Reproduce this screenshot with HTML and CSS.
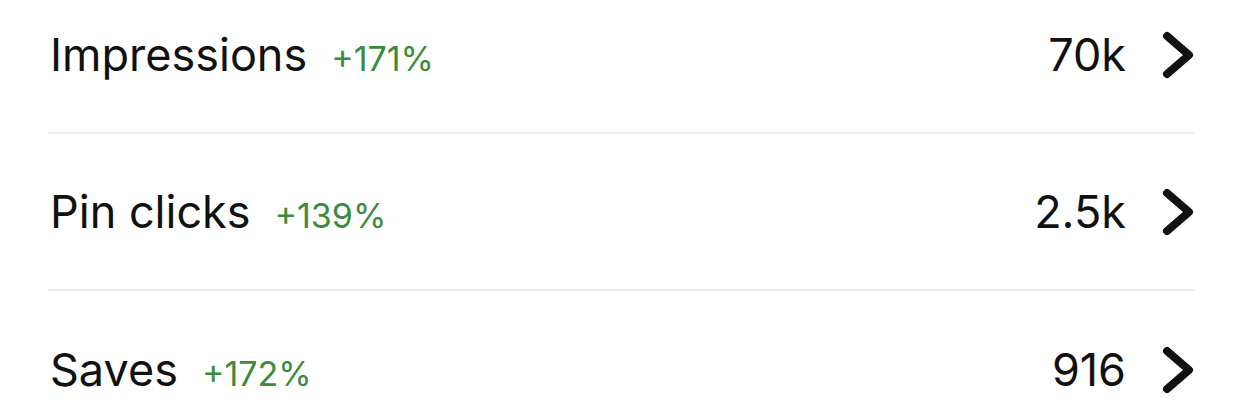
FILE: index.html
```html
<!DOCTYPE html>
<html>
<head>
    <title>Stats</title>
    <link rel="stylesheet" href="styles.css">
</head>
<body>
  <ul class="stat-list">
    <li class="stat-row">
      <div class="stat-name">Impressions <span class="stat-change">+171%</span></div>
      <div class="stat-value">70k
        <svg class="chevron" viewBox="0 0 32 48"><polyline points="5,5 27,24 5,43" /></svg>
      </div>
    </li>
    <li class="stat-row">
      <div class="stat-name">Pin clicks <span class="stat-change">+139%</span></div>
      <div class="stat-value">2.5k
        <svg class="chevron" viewBox="0 0 32 48"><polyline points="5,5 27,24 5,43" /></svg>
      </div>
    </li>
    <li class="stat-row">
      <div class="stat-name">Saves <span class="stat-change">+172%</span></div>
      <div class="stat-value">916
        <svg class="chevron" viewBox="0 0 32 48"><polyline points="5,5 27,24 5,43" /></svg>
      </div>
    </li>
  </ul>
</body>
</html>
```

FILE: styles.css
```css
* {
    margin: 0;
    padding: 0;
    box-sizing: border-box;
}

body {
    font-family: Inter, "Noto Sans", sans-serif;
    background-color: #fff;
    color: #111;
    height: 413px;
    overflow: hidden;
}

.stat-list {
    list-style: none;
    margin: -23px 48px 0 48px;
}

.stat-row {
    display: flex;
    justify-content: space-between;
    align-items: center;
    height: 157px;
    border-bottom: 2px solid #ebebeb;
}

.stat-row:last-child {
    border-bottom: none;
}

.stat-name {
    font-size: 45px;
    padding-left: 2px;
    display: flex;
    align-items: baseline;
}

.stat-change {
    font-size: 34px;
    color: #3b8c3a;
    margin-left: 24px;
}

.stat-value {
    font-size: 45px;
    display: flex;
    align-items: center;
}

.chevron {
    width: 32px;
    height: 48px;
    margin-left: 36px;
    fill: none;
    stroke: #111;
    stroke-width: 8;
    stroke-linecap: round;
    stroke-linejoin: round;
}
```
